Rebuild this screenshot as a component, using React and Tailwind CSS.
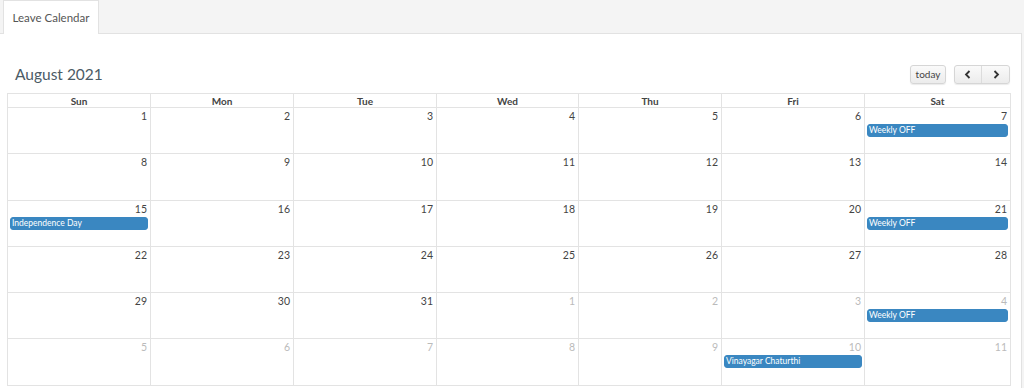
import React from "react";

const weeks = [
  [1, 2, 3, 4, 5, 6, 7].map((d) => ({ d, cur: true })),
  [8, 9, 10, 11, 12, 13, 14].map((d) => ({ d, cur: true })),
  [15, 16, 17, 18, 19, 20, 21].map((d) => ({ d, cur: true })),
  [22, 23, 24, 25, 26, 27, 28].map((d) => ({ d, cur: true })),
  [
    { d: 29, cur: true },
    { d: 30, cur: true },
    { d: 31, cur: true },
    { d: 1, cur: false },
    { d: 2, cur: false },
    { d: 3, cur: false },
    { d: 4, cur: false },
  ],
  [5, 6, 7, 8, 9, 10, 11].map((d) => ({ d, cur: false })),
];

const events = {
  "0-6": "Weekly OFF",
  "2-0": "Independence Day",
  "2-6": "Weekly OFF",
  "4-6": "Weekly OFF",
  "5-5": "Vinayagar Chaturthi",
};

const days = ["Sun", "Mon", "Tue", "Wed", "Thu", "Fri", "Sat"];

const cols = "grid grid-cols-[143px_143px_143px_142px_143px_143px_146px]";

export default function App() {
  return (
    <div
      className="w-[1024px] h-[388px] overflow-hidden bg-[#f4f4f4]"
      style={{ fontFamily: "Lato, 'Open Sans', sans-serif" }}
    >
      <div className="h-[33px] flex pl-[3px]">
        <div className="h-[34px] w-[96px] bg-white border border-b-0 border-[#e2e2e2] flex items-center justify-center text-[11.5px] text-[#555] relative z-10">
          Leave Calendar
        </div>
      </div>
      <div className="w-[1022px] h-[360px] bg-white border-t border-r border-[#e2e2e2] pt-[31px] pl-[7px]">
        <div className="w-[1003px] flex items-center justify-between h-[19px]">
          <div className="ml-[8px] text-[15.5px] text-[#4c5b66] leading-none">
            August 2021
          </div>
          <div className="flex items-center">
            <button className="h-[19px] w-[36px] rounded-[3px] border border-[#d6d6d6] bg-gradient-to-b from-[#fafafa] to-[#ececec] shadow-[0_1px_1px_rgba(0,0,0,0.08)] text-[10px] text-[#444] flex items-center justify-center">
              today
            </button>
            <div className="ml-[8px] flex h-[19px] rounded-[3px] border border-[#d6d6d6] bg-gradient-to-b from-[#fafafa] to-[#ececec] shadow-[0_1px_1px_rgba(0,0,0,0.08)]">
              <div className="w-[27px] flex items-center justify-center border-r border-[#dcdcdc]">
                <svg width="8" height="9" viewBox="0 0 8 9">
                  <path d="M5.5 1 L2 4.5 L5.5 8" stroke="#333" strokeWidth="1.8" fill="none" />
                </svg>
              </div>
              <div className="w-[27px] flex items-center justify-center">
                <svg width="8" height="9" viewBox="0 0 8 9">
                  <path d="M2.5 1 L6 4.5 L2.5 8" stroke="#333" strokeWidth="1.8" fill="none" />
                </svg>
              </div>
            </div>
          </div>
        </div>
        <div className="mt-[9px] w-[1004px] border-l border-t border-[#e3e3e3]">
          <div className={cols}>
            {days.map((d) => (
              <div
                key={d}
                className="h-[14px] border-r border-b border-[#e3e3e3] text-[10px] font-bold text-[#444] flex items-center justify-center leading-none"
              >
                {d}
              </div>
            ))}
          </div>
          {weeks.map((w, wi) => (
            <div key={wi} className={cols}>
              {w.map((c, ci) => {
                const ev = events[`${wi}-${ci}`];
                return (
                  <div
                    key={ci}
                    className="h-[46.3px] border-r border-b border-[#e3e3e3] flex flex-col"
                  >
                    <div
                      className={`text-right pr-[3px] pt-[2px] text-[10.5px] leading-[13px] ${
                        c.cur ? "text-[#444]" : "text-[#bbb]"
                      }`}
                    >
                      {c.d}
                    </div>
                    {ev && (
                      <div className="mx-[2px] mt-[1px] h-[13px] rounded-[3px] bg-[#3a87c1] border border-[#3a87c1] text-white text-[8.5px] leading-[11px] pl-[1px] whitespace-nowrap overflow-hidden">
                        {ev}
                      </div>
                    )}
                  </div>
                );
              })}
            </div>
          ))}
        </div>
      </div>
    </div>
  );
}
